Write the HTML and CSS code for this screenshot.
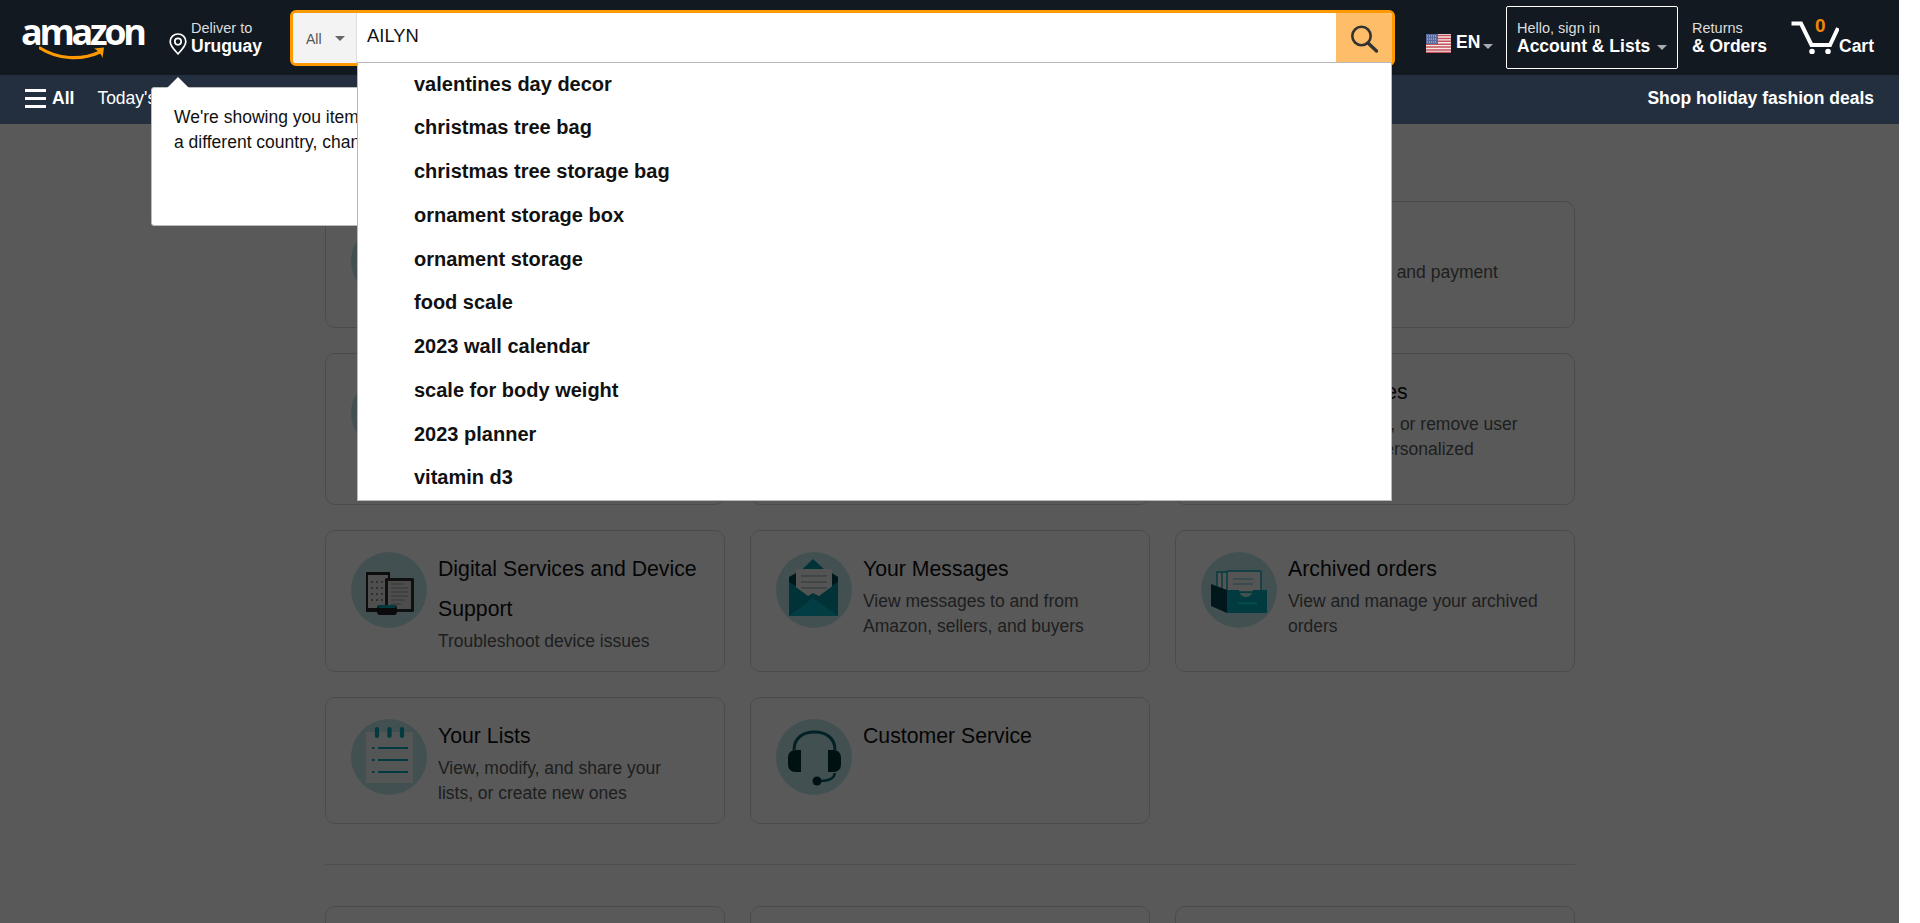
FILE: index.html
```html
<!DOCTYPE html>
<html lang="en">
<head>
<meta charset="utf-8">
<title>Your Account</title>
<link rel="stylesheet" href="styles.css">
</head>
<body>
<div class="viewport">
  <header class="belt">
    <a class="logo">
      <span class="logo-word">amazon</span>
      <svg class="logo-smile" width="68" height="16" viewBox="0 0 68 16"><path d="M1 2C18 13 42 15 61 6" fill="none" stroke="#f90" stroke-width="3.2" stroke-linecap="round"/><path d="M55 2.5L65 1.5L63.5 12C62.5 8.5 59 4.5 55 2.5Z" fill="#f90"/></svg>
    </a>
    <a class="deliver">
      <svg class="pin" width="18" height="22" viewBox="0 0 18 22"><path d="M9 1C4.6 1 1.2 4.4 1.2 8.6C1.2 13.4 6 17.6 9 20.8C12 17.6 16.8 13.4 16.8 8.6C16.8 4.4 13.4 1 9 1Z" fill="none" stroke="#fff" stroke-width="1.7"/><circle cx="9" cy="8.6" r="3.2" fill="none" stroke="#fff" stroke-width="1.7"/></svg>
      <span class="two-line">
        <span class="line1">Deliver to</span>
        <span class="line2">Uruguay</span>
      </span>
    </a>
    <div class="search">
      <div class="search-cat"><span>All</span><i class="caret caret-dark"></i></div>
      <div class="search-input">AILYN</div>
      <div class="search-btn">
        <svg width="30" height="30" viewBox="0 0 30 30"><circle cx="12.5" cy="12" r="9.2" fill="none" stroke="#333" stroke-width="2.6"/><path d="M19 19L27.5 27" stroke="#333" stroke-width="3.4" stroke-linecap="round"/></svg>
      </div>
      <ul class="suggest">
        <li>valentines day decor</li>
        <li>christmas tree bag</li>
        <li>christmas tree storage bag</li>
        <li>ornament storage box</li>
        <li>ornament storage</li>
        <li>food scale</li>
        <li>2023 wall calendar</li>
        <li>scale for body weight</li>
        <li>2023 planner</li>
        <li>vitamin d3</li>
      </ul>
    </div>
    <a class="lang">
      <svg class="flag" width="25" height="19" viewBox="0 0 25 19"><rect width="25" height="19" fill="#f4e9e9"/><path d="M0 1.5H25M0 4.4H25M0 7.3H25M0 10.2H25M0 13.1H25M0 16H25M0 18.4H25" stroke="#c4525a" stroke-width="1.5"/><rect width="12" height="10" fill="#5a6a9c"/><path d="M1 2H11M1 5H11M1 8H11" stroke="#c9cfe2" stroke-width="1" stroke-dasharray="1 1"/></svg>
      <span class="lang-text">EN</span>
      <i class="caret"></i>
    </a>
    <a class="account">
      <span class="line1">Hello, sign in</span>
      <span class="line2">Account &amp; Lists <i class="caret"></i></span>
    </a>
    <a class="returns">
      <span class="line1">Returns</span>
      <span class="line2">&amp; Orders</span>
    </a>
    <a class="cart">
      <svg class="cart-icon" width="48" height="33" viewBox="0 0 48 33"><path d="M0.5 2.5H10L20.5 24H39L47 7" fill="none" stroke="#fff" stroke-width="4"/><circle cx="21" cy="30.5" r="2.8" fill="#fff"/><circle cx="37" cy="30.5" r="2.8" fill="#fff"/></svg>
      <span class="cart-count">0</span>
      <span class="cart-label">Cart</span>
    </a>
  </header>

  <nav class="subnav">
    <a class="all"><span class="burger"><i></i><i></i><i></i></span>All</a>
    <a class="sublink">Today's Deals</a>
    <a class="sublink">Customer Service</a>
    <a class="sublink">Registry</a>
    <a class="sublink">Gift Cards</a>
    <a class="promo">Shop holiday fashion deals</a>
  </nav>

  <main class="main">
    <div class="cards">
      <article class="card">
        <svg class="ico" viewBox="0 0 76 76"><circle cx="38" cy="38" r="38" class="c"/><rect x="17" y="24" width="42" height="30" fill="#f0c14b"/></svg>
        <div><h2>Your Orders</h2><p>Track, return, or buy things again</p></div>
      </article>
      <article class="card">
        <svg class="ico" viewBox="0 0 76 76"><circle cx="38" cy="38" r="38" class="c"/><rect x="24" y="32" width="28" height="24" fill="#05c3d4"/></svg>
        <div><h2>Login &amp; security</h2><p>Edit login, name, and mobile number</p></div>
      </article>
      <article class="card">
        <svg class="ico" viewBox="0 0 76 76"><circle cx="38" cy="38" r="38" class="c"/></svg>
        <div><h2>Prime</h2><p>View benefits and payment settings</p></div>
      </article>
      <article class="card">
        <svg class="ico" viewBox="0 0 76 76"><circle cx="38" cy="38" r="38" class="c"/></svg>
        <div><h2>Your Addresses</h2><p>Edit addresses for orders and gifts</p></div>
      </article>
      <article class="card">
        <svg class="ico" viewBox="0 0 76 76"><circle cx="38" cy="38" r="38" class="c"/></svg>
        <div><h2>Your Payments</h2><p>Manage payment methods and settings, view all transactions</p></div>
      </article>
      <article class="card">
        <svg class="ico" viewBox="0 0 76 76"><circle cx="38" cy="38" r="38" class="c"/></svg>
        <div><h2>Your Profiles</h2><p>Manage, add, or remove user profiles for personalized experiences</p></div>
      </article>

      <article class="card">
        <svg class="ico" viewBox="0 0 76 76">
          <circle cx="38" cy="38" r="38" class="c"/>
          <rect x="15" y="20" width="24" height="40" fill="#262626"/>
          <rect x="17" y="23" width="20" height="33" fill="#e2e2e2"/>
          <path d="M20 30H35M20 36H35M20 42H35M20 48H35" stroke="#8a8a8a" stroke-width="2" stroke-dasharray="2 3"/>
          <rect x="34" y="26" width="29" height="34" rx="1.5" fill="#2e2e2e"/>
          <rect x="37" y="29" width="23" height="28" fill="#dcdcdc"/>
          <path d="M40 32H52M40 36H57M40 40H57M40 44H57M40 48H54M40 52H50" stroke="#999" stroke-width="1.2"/>
          <rect x="26" y="53" width="20" height="10" rx="3" fill="#222"/>
          <rect x="27" y="53" width="18" height="3" rx="1.5" fill="#05a3b4"/>
        </svg>
        <div><h2>Digital Services and Device Support</h2><p>Troubleshoot device issues</p></div>
      </article>
      <article class="card">
        <svg class="ico" viewBox="0 0 76 76">
          <circle cx="38" cy="38" r="38" class="c"/>
          <path d="M13 30L37 7L62 30V64H13Z" fill="#04909e"/>
          <path d="M13 25L20 21V34L13 30ZM62 25L56 21V34L62 30Z" fill="#024650"/>
          <rect x="20" y="17" width="36" height="28" fill="#f0f0f0"/>
          <path d="M25 24H51M25 30H51M25 36H51" stroke="#b7c9c9" stroke-width="2"/>
          <path d="M13 30L32 44L37 41L43 44L62 30V64H13Z" fill="#04909e"/>
          <path d="M13 64L37 46L62 64Z" fill="#04b0c0"/>
        </svg>
        <div><h2>Your Messages</h2><p>View messages to and from Amazon, sellers, and buyers</p></div>
      </article>
      <article class="card">
        <svg class="ico" viewBox="0 0 76 76">
          <circle cx="38" cy="38" r="38" class="c"/>
          <path d="M16 40V20H48V40ZM21 40V20H53V40Z" fill="#f2f2f2" stroke="#05a5b4" stroke-width="1.4"/>
          <path d="M26 40V20a1 1 0 0 1 1-1H59a1 1 0 0 1 1 1V40Z" fill="#f2f2f2" stroke="#05a5b4" stroke-width="1.4"/>
          <path d="M32 27H52M32 32H52" stroke="#7fd2da" stroke-width="1.6"/>
          <path d="M10 32L26 38V61L10 54Z" fill="#024650"/>
          <path d="M26 38H38a7 7 0 0 0 14 0H66V61H26Z" fill="#05a5b4"/>
          <rect x="37" y="50" width="19" height="2.5" fill="#0bd0e0"/>
        </svg>
        <div><h2>Archived orders</h2><p>View and manage your archived orders</p></div>
      </article>
      <article class="card">
        <svg class="ico" viewBox="0 0 76 76">
          <circle cx="38" cy="38" r="38" class="c"/>
          <rect x="15" y="13" width="47" height="51" fill="#f0f4f4"/>
          <path d="M26 10V17M38.5 10V17M51 10V17" stroke="#05a5b4" stroke-width="4.2" stroke-linecap="round"/>
          <path d="M27 29H57M27 41H57M27 53H57" stroke="#05a5b4" stroke-width="2"/>
          <path d="M21 29H23.5M21 41H23.5M21 53H23.5" stroke="#05a5b4" stroke-width="2"/>
        </svg>
        <div><h2>Your Lists</h2><p>View, modify, and share your lists, or create new ones</p></div>
      </article>
      <article class="card">
        <svg class="ico" viewBox="0 0 76 76">
          <circle cx="38" cy="38" r="38" class="c"/>
          <path d="M18 31C18 19 27 13 38.5 13C50 13 59 19 59 31" fill="none" stroke="#035f6a" stroke-width="3"/>
          <path d="M25 31V53H19a7 7 0 0 1-7-7V38a7 7 0 0 1 7-7Z" fill="#02333a"/>
          <path d="M52 31V53H58a7 7 0 0 0 7-7V38a7 7 0 0 0-7-7Z" fill="#02333a"/>
          <path d="M59 54C58 60 53 62 44 62" fill="none" stroke="#035f6a" stroke-width="2.4"/>
          <circle cx="41" cy="62" r="4.5" fill="#02333a"/>
        </svg>
        <div><h2>Customer Service</h2></div>
      </article>
    </div>
    <hr class="divider">
    <div class="cards">
      <article class="card"><div><h2>Digital content and devices</h2></div></article>
      <article class="card"><div><h2>Email alerts, messages, and ads</h2></div></article>
      <article class="card"><div><h2>More ways to pay</h2></div></article>
    </div>
  </main>

  <div class="overlay"></div>

  <div class="popover">
    <p>We're showing you items that ship to Uruguay. To see items that ship to<br>a different country, change your delivery address.</p>
    <div class="popover-actions"><span class="pbtn">Dismiss</span><span class="pbtn">Change Address</span></div>
  </div>
</div>
</body>
</html>
```

FILE: styles.css
```css
* { box-sizing: border-box; }
html, body { margin: 0; padding: 0; background: #fff; }
body { font-family: "Liberation Sans", Arial, sans-serif; color: #0f1111; }
h2, p, ul { margin: 0; padding: 0; }
i { font-style: normal; }

.viewport { position: relative; width: 1899px; height: 923px; overflow: hidden; background: #fff; }

/* top belt */
.belt { display: flex; align-items: center; height: 75px; padding: 0 24px 0 23px; background: #131921; color: #fff; }
.logo { position: relative; display: block; width: 120px; height: 54px; margin-right: 26px; }
.logo-word { display: block; margin-left: -2px; font-family: "Open Sans", sans-serif; font-weight: 700; font-size: 36px; line-height: 42px; letter-spacing: -3.3px; color: #fff; }
.logo-smile { position: absolute; left: 16px; top: 35px; }

.deliver { display: flex; align-items: flex-end; width: 92px; margin-right: 29px; padding-bottom: 1px; }
.pin { margin-right: 4px; margin-bottom: 1px; flex: none; }
.two-line { display: flex; flex-direction: column; }
.line1 { display: block; font-size: 14.5px; line-height: 18px; color: #ddd; white-space: nowrap; }
.line2 { display: block; font-size: 17.5px; line-height: 19px; font-weight: 700; color: #fff; white-space: nowrap; }

.caret { display: inline-block; width: 0; height: 0; border-style: solid; border-width: 5px 5px 0; border-color: #a7acb2 transparent transparent; vertical-align: 2px; }
.caret-dark { border-color: #666 transparent transparent; }

/* search */
.search { position: relative; flex: none; display: flex; width: 1105px; height: 56px; border: 3px solid #f90; border-radius: 6px; background: #fff; }
.search-cat { display: flex; align-items: center; justify-content: space-between; width: 64px; padding: 2px 11px 0 13px; background: #f3f3f3; border-right: 1px solid #ddd; border-radius: 3px 0 0 3px; font-size: 14px; color: #555; }
.search-input { flex: 1; padding: 0 0 4px 10px; display: flex; align-items: center; font-size: 18.4px; color: #111; }
.search-btn { display: flex; align-items: center; justify-content: center; width: 56px; padding-top: 2px; background: #febd69; border-radius: 0 3px 3px 0; }

.suggest { position: absolute; z-index: 5; left: 64px; right: 0; top: 49px; list-style: none; background: #fff; border: 1px solid #b9b9b9; }
.suggest li { height: 43.75px; line-height: 43.75px; padding-left: 56px; font-size: 20px; font-weight: 700; color: #111; white-space: nowrap; }

/* right items */
.lang { display: flex; align-items: center; margin-left: 31px; margin-top: 11px; width: 67px; }
.flag { flex: none; margin-right: 5px; }
.lang-text { font-size: 17.5px; font-weight: 700; margin-right: 3px; margin-top: -1px; }
.lang .caret { margin-top: 7px; }

.account { display: block; width: 172px; height: 63px; margin-left: 13px; padding: 12px 0 0 10px; border: 1px solid #fff; border-radius: 2px; }
.account .caret { margin-left: 2px; }

.returns { display: block; margin-left: 14px; padding-bottom: 1px; width: 74px; }

.cart { position: relative; display: flex; align-items: flex-end; margin-left: 25px; width: 84px; height: 33px; }
.cart-icon { flex: none; }
.cart-count { position: absolute; left: 24px; top: -4px; font-size: 19px; font-weight: 700; line-height: 18px; color: #f08804; }
.cart-label { font-size: 17.5px; font-weight: 700; line-height: 15px; }

/* sub nav */
.subnav { display: flex; align-items: center; height: 49px; padding: 0 25px 2px; background: #232f3e; color: #fff; font-size: 17.5px; }
.all { display: flex; align-items: center; font-weight: 700; margin-right: 23px; }
.burger { display: flex; flex-direction: column; gap: 5px; width: 21px; margin-right: 6px; }
.burger i { display: block; height: 3px; background: #fff; }
.sublink { margin-right: 22px; }
.promo { margin-left: auto; font-weight: 700; }

/* main */
.main { width: 1250px; margin-left: 325px; padding-top: 77px; }
.cards { display: grid; grid-template-columns: repeat(3, 400px); gap: 25px; }
.card { display: flex; gap: 11px; padding: 17.5px 25px; border: 1px solid #d5d9d9; border-radius: 10px; background: #fff; }
.ico { flex: none; width: 76px; height: 76px; margin-top: 3.5px; }
.c { fill: #bfe6e8; }
.card h2 { font-size: 21.25px; line-height: 40px; font-weight: 400; color: #0f1111; }
.card p { font-size: 17.5px; line-height: 25px; color: #565959; }
.divider { height: 1px; margin: 40px 0 41px; border: 0; background: #dedede; }

/* overlays */
.overlay { position: absolute; z-index: 1; left: 0; right: 0; top: 124px; bottom: 0; background: rgba(0, 0, 0, .65); }

.popover { position: absolute; z-index: 3; left: 151px; top: 87px; width: 640px; height: 139px; padding: 17px 22px; background: #fff; border: 1px solid #bbb; border-radius: 3px; font-size: 17.5px; line-height: 25px; color: #111; }
.popover::before { content: ""; position: absolute; left: 15px; top: -11px; width: 0; height: 0; border-style: solid; border-width: 0 11px 11px; border-color: transparent transparent #fff; }
.popover-actions { display: flex; justify-content: flex-end; gap: 12px; margin-top: 10px; }
.pbtn { padding: 2px 14px; border: 1px solid #ccc; border-radius: 4px; font-size: 16px; }
```
